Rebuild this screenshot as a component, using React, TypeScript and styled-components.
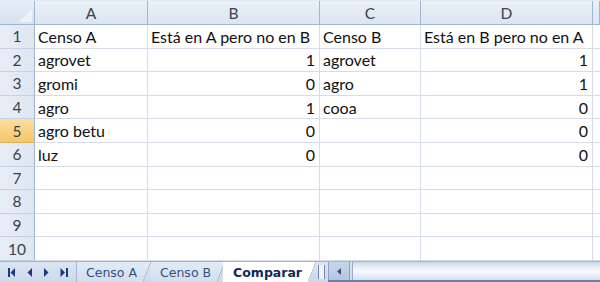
import styled, { createGlobalStyle } from "styled-components";

const GlobalStyle = createGlobalStyle`
  html, body {
    margin: 0;
    padding: 0;
    background: #ffffff;
  }
  body {
    width: 600px;
    height: 282px;
    overflow: hidden;
    font-family: Lato, "Open Sans", sans-serif;
  }
`;

const Sheet = styled.div`
  width: 600px;
  height: 282px;
  display: flex;
  flex-direction: column;
  overflow: hidden;
`;

const Grid = styled.div`
  display: grid;
  grid-template-columns: 35px 113px 172px 101px 172px 7px;
  grid-template-rows: 24px repeat(10, 1fr);
  height: 261px;
  border-top: 1px solid #e3eaf4;
  box-sizing: border-box;
`;

const Corner = styled.div`
  background: linear-gradient(#e6edf7, #d7e1ef);
  border-right: 1px solid #9eb6ce;
  border-bottom: 1px solid #9eb6ce;
  display: flex;
  align-items: flex-end;
  justify-content: flex-end;
  padding: 0 2px 2px 0;
`;

const ColHead = styled.div`
  background: linear-gradient(#eaf0f8, #dbe5f1);
  border-right: 1px solid #9eb6ce;
  border-bottom: 1px solid #9eb6ce;
  display: flex;
  align-items: center;
  justify-content: center;
  font-size: 15.5px;
  color: #3a414b;
`;

const RowHead = styled.div<{ $active?: boolean }>`
  background: ${(p) =>
    p.$active
      ? "linear-gradient(#fadf9f, #f4c669)"
      : "linear-gradient(90deg, #e8eef7, #dde6f2)"};
  border-right: 1px solid #9eb6ce;
  border-bottom: 1px solid ${(p) => (p.$active ? "#e2b25a" : "#c5d2e3")};
  display: flex;
  align-items: center;
  justify-content: center;
  font-size: 15.5px;
  color: #3a414b;
`;

const Cell = styled.div<{ $num?: boolean }>`
  border-right: 1px solid #d6dde8;
  border-bottom: 1px solid #d6dde8;
  display: flex;
  align-items: center;
  justify-content: ${(p) => (p.$num ? "flex-end" : "flex-start")};
  padding: 0 4px 0 3px;
  font-size: 16px;
  color: #111111;
  white-space: nowrap;
  overflow: hidden;
`;

const TabBar = styled.div`
  flex: 1;
  display: flex;
  align-items: stretch;
  background: linear-gradient(#dbe5f2, #cdd9ea);
  border-top: 1px solid #9eb6ce;
  font-family: "DejaVu Sans", Tahoma, sans-serif;
`;

const Nav = styled.div`
  width: 77px;
  display: flex;
  align-items: center;
  justify-content: space-around;
  padding: 0 3px;
  box-sizing: border-box;
  border-right: 1px solid #a7b9d1;
`;

const Tab = styled.div<{ $active?: boolean }>`
  position: relative;
  display: flex;
  align-items: center;
  padding: 0 14px 0 ${(p) => (p.$active ? "10px" : "9px")};
  font-size: 12.5px;
  font-weight: ${(p) => (p.$active ? 700 : 400)};
  color: ${(p) => (p.$active ? "#102a55" : "#34507c")};
  background: ${(p) =>
    p.$active ? "#ffffff" : "linear-gradient(#e2eaf5, #d3deee)"};
  clip-path: polygon(0 0, 100% 0, calc(100% - 8px) 100%, 0 100%);
  margin-left: ${(p) => (p.$active ? "-2px" : "0")};

  &::after {
    content: "";
    position: absolute;
    right: 0;
    top: 0;
    bottom: 0;
    width: 8px;
    background: linear-gradient(
      to bottom right,
      transparent calc(50% - 0.8px),
      #8497b4 50%,
      transparent calc(50% + 0.8px)
    );
  }
`;

const Split = styled.div`
  width: 5px;
  margin-left: 2px;
  border-left: 1px solid #6f84a6;
  border-right: 1px solid #6f84a6;
  background: #eef3fa;
  margin-top: 3px;
  margin-bottom: 3px;
`;

const Scroll = styled.div`
  flex: 1;
  display: flex;
  margin-left: 3px;
  border-bottom: 2px solid #6b82a8;
`;

const ScrollButton = styled.div`
  width: 20px;
  display: flex;
  align-items: center;
  justify-content: center;
  background: linear-gradient(#c8d6ea, #b3c6e0);
  border-left: 1px solid #8da2c2;
  border-right: 1px solid #8da2c2;
`;

const Thumb = styled.div`
  flex: 1;
  margin-left: 2px;
  background: linear-gradient(#c9d7ea 0%, #eef3f9 35%, #f6f9fc 55%, #d4dfee 100%);
  border-left: 1px solid #98abc8;
`;

const ICON = "#1d3b78";

function FirstIcon() {
  return (
    <svg width="8" height="9" viewBox="0 0 8 9">
      <rect x="0" y="0" width="2" height="9" fill={ICON} />
      <polygon points="7,0 2.5,4.5 7,9" fill={ICON} />
    </svg>
  );
}

function PrevIcon() {
  return (
    <svg width="6" height="9" viewBox="0 0 6 9">
      <polygon points="5,0 0.5,4.5 5,9" fill={ICON} />
    </svg>
  );
}

function NextIcon() {
  return (
    <svg width="6" height="9" viewBox="0 0 6 9">
      <polygon points="1,0 5.5,4.5 1,9" fill={ICON} />
    </svg>
  );
}

function LastIcon() {
  return (
    <svg width="8" height="9" viewBox="0 0 8 9">
      <polygon points="0.5,0 5,4.5 0.5,9" fill={ICON} />
      <rect x="6" y="0" width="2" height="9" fill={ICON} />
    </svg>
  );
}

type Row = [string, string, string, string];

const rows: Row[] = [
  ["Censo A", "Está en A pero no en B", "Censo B", "Está en B pero no en A"],
  ["agrovet", "1", "agrovet", "1"],
  ["gromi", "0", "agro", "1"],
  ["agro", "1", "cooa", "0"],
  ["agro betu", "0", "", "0"],
  ["luz", "0", "", "0"],
  ["", "", "", ""],
  ["", "", "", ""],
  ["", "", "", ""],
  ["", "", "", ""],
];

const isNum = (v: string) => /^\d+$/.test(v);

export default function App() {
  return (
    <Sheet>
      <GlobalStyle />
      <Grid>
        <Corner>
          <svg width="13" height="13" viewBox="0 0 13 13">
            <polygon points="13,0 13,13 0,13" fill="#eef1f5" />
          </svg>
        </Corner>
        {["A", "B", "C", "D"].map((c) => (
          <ColHead key={c}>{c}</ColHead>
        ))}
        <ColHead />
        {rows.map((r, i) => (
          <>
            <RowHead key={`h${i}`} $active={i === 4}>
              {i + 1}
            </RowHead>
            {r.map((v, j) => (
              <Cell key={`c${i}-${j}`} $num={isNum(v)}>
                {v}
              </Cell>
            ))}
            <Cell key={`e${i}`} />
          </>
        ))}
      </Grid>
      <TabBar>
        <Nav>
          <FirstIcon />
          <PrevIcon />
          <NextIcon />
          <LastIcon />
        </Nav>
        <Tab>Censo A</Tab>
        <Tab>Censo B</Tab>
        <Tab $active>Comparar</Tab>
        <Split />
        <Scroll>
          <ScrollButton>
            <svg width="4" height="7" viewBox="0 0 4 7">
              <polygon points="4,0 0,3.5 4,7" fill="#3a5584" />
            </svg>
          </ScrollButton>
          <Thumb />
        </Scroll>
      </TabBar>
    </Sheet>
  );
}
